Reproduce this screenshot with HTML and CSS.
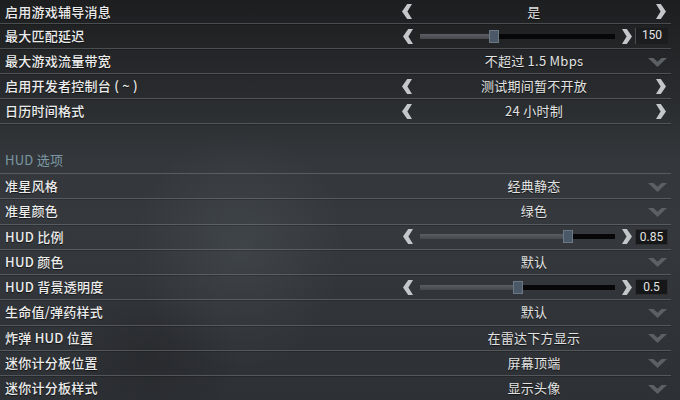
FILE: index.html
```html
<!DOCTYPE html>
<html lang="zh">
<head>
<meta charset="utf-8">
<link rel="stylesheet" href="styles.css">
</head>
<body>
<svg class="defs" aria-hidden="true">
  <symbol id="al" viewBox="0 0 10 15"><polygon points="10,0 5.2,0 0,7.5 5.2,15 10,15 5.4,7.5"/></symbol>
  <symbol id="ar" viewBox="0 0 10 15"><polygon points="0,0 4.8,0 10,7.5 4.8,15 0,15 4.6,7.5"/></symbol>
  <symbol id="dd" viewBox="0 0 19 9"><polygon points="0,0 5.5,0 9.5,3.8 13.5,0 19,0 9.5,9"/></symbol>
</svg>
<div class="panel">
  <div class="row first">
    <span class="label">启用游戏辅导消息</span>
    <div class="ctl cycler">
      <svg class="arr left"><use href="#al"/></svg>
      <span class="val">是</span>
      <svg class="arr right"><use href="#ar"/></svg>
    </div>
  </div>
  <div class="row">
    <span class="label">最大匹配延迟</span>
    <div class="ctl slider">
      <svg class="arr"><use href="#al"/></svg>
      <div class="track"><div class="fill" style="width:38%"></div><div class="thumb" style="left:38%"></div></div>
      <svg class="arr"><use href="#ar"/></svg>
      <span class="box plain">150</span>
    </div>
  </div>
  <div class="row">
    <span class="label">最大游戏流量带宽</span>
    <div class="ctl dropdown">
      <span class="val">不超过 1.5 Mbps</span>
      <svg class="chev"><use href="#dd"/></svg>
    </div>
  </div>
  <div class="row">
    <span class="label">启用开发者控制台 ( ~ )</span>
    <div class="ctl cycler">
      <svg class="arr left"><use href="#al"/></svg>
      <span class="val">测试期间暂不开放</span>
      <svg class="arr right"><use href="#ar"/></svg>
    </div>
  </div>
  <div class="row">
    <span class="label">日历时间格式</span>
    <div class="ctl cycler">
      <svg class="arr left"><use href="#al"/></svg>
      <span class="val">24 小时制</span>
      <svg class="arr right"><use href="#ar"/></svg>
    </div>
  </div>

  <div class="section"><span>HUD 选项</span></div>

  <div class="row hud">
    <span class="label">准星风格</span>
    <div class="ctl dropdown">
      <span class="val">经典静态</span>
      <svg class="chev"><use href="#dd"/></svg>
    </div>
  </div>
  <div class="row hud">
    <span class="label">准星颜色</span>
    <div class="ctl dropdown">
      <span class="val">绿色</span>
      <svg class="chev"><use href="#dd"/></svg>
    </div>
  </div>
  <div class="row hud">
    <span class="label">HUD 比例</span>
    <div class="ctl slider">
      <svg class="arr"><use href="#al"/></svg>
      <div class="track"><div class="fill" style="width:76%"></div><div class="thumb" style="left:76%"></div></div>
      <svg class="arr"><use href="#ar"/></svg>
      <span class="box">0.85</span>
    </div>
  </div>
  <div class="row hud">
    <span class="label">HUD 颜色</span>
    <div class="ctl dropdown">
      <span class="val">默认</span>
      <svg class="chev"><use href="#dd"/></svg>
    </div>
  </div>
  <div class="row hud">
    <span class="label">HUD 背景透明度</span>
    <div class="ctl slider">
      <svg class="arr"><use href="#al"/></svg>
      <div class="track"><div class="fill" style="width:50%"></div><div class="thumb" style="left:50%"></div></div>
      <svg class="arr"><use href="#ar"/></svg>
      <span class="box">0.5</span>
    </div>
  </div>
  <div class="row hud">
    <span class="label">生命值/弹药样式</span>
    <div class="ctl dropdown">
      <span class="val">默认</span>
      <svg class="chev"><use href="#dd"/></svg>
    </div>
  </div>
  <div class="row hud">
    <span class="label">炸弹 HUD 位置</span>
    <div class="ctl dropdown">
      <span class="val">在雷达下方显示</span>
      <svg class="chev"><use href="#dd"/></svg>
    </div>
  </div>
  <div class="row hud">
    <span class="label">迷你计分板位置</span>
    <div class="ctl dropdown">
      <span class="val">屏幕顶端</span>
      <svg class="chev"><use href="#dd"/></svg>
    </div>
  </div>
  <div class="row hud">
    <span class="label">迷你计分板样式</span>
    <div class="ctl dropdown">
      <span class="val">显示头像</span>
      <svg class="chev"><use href="#dd"/></svg>
    </div>
  </div>
</div>
</body>
</html>
```

FILE: styles.css
```css
html, body {
  margin: 0;
  padding: 0;
}
body {
  width: 680px;
  height: 400px;
  overflow: hidden;
  font-family: "Noto Sans CJK SC", "Noto Sans", sans-serif;
  font-size: 13px;
  letter-spacing: 0.25px;
  color: #e6e6e6;
  background:
    radial-gradient(ellipse 150px 170px at 240px 250px, rgba(120,130,138,0.16), rgba(120,130,138,0) 70%),
    radial-gradient(ellipse 120px 90px at 150px 360px, rgba(20,22,25,0.25), rgba(20,22,25,0) 75%),
    linear-gradient(180deg, #1d1e1f 0px, #232527 50px, #2b2e31 110px, #34383c 165px, #35393d 230px, #303337 320px, #2d3034 400px);
}
.defs {
  width: 0;
  height: 0;
  position: absolute;
}
.panel {
  width: 671px;
  display: flex;
  flex-direction: column;
}
.row {
  height: 24px;
  display: grid;
  grid-template-columns: 1fr 271px;
  align-items: center;
  border-bottom: 1px solid rgba(150,156,162,0.36);
  box-shadow: 0 1px 0 rgba(0,0,0,0.18);
}
.row.first {
  height: 23px;
}
.row.hud {
  height: 24.25px;
}
.label {
  padding-left: 5px;
  font-weight: 500;
  color: #ececec;
  line-height: 18px;
  white-space: nowrap;
  text-shadow: 0 1px 1px rgba(0,0,0,0.6);
}
.section {
  display: flex;
  align-items: flex-end;
  padding-left: 5px;
  border-bottom: 1px solid rgba(150,156,162,0.36);
  box-sizing: border-box;
  height: 50px;
}
.section span {
  line-height: 18px;
  padding-bottom: 4px;
  color: #7c98a3;
  font-weight: 400;
}
.ctl {
  height: 100%;
  display: grid;
  align-items: center;
}
.cycler, .dropdown {
  grid-template-columns: 1fr;
  grid-template-rows: 1fr;
  padding: 0 5px 0 2px;
}
.cycler > *, .dropdown > * {
  grid-area: 1 / 1;
}
.val {
  justify-self: center;
  color: #e2e2e2;
  line-height: 18px;
  white-space: nowrap;
  text-shadow: 0 1px 1px rgba(0,0,0,0.6);
}
.arr {
  width: 10px;
  height: 15px;
  fill: #c4c7c9;
}
.arr.left { justify-self: start; }
.arr.right { justify-self: end; }
.chev {
  justify-self: end;
  width: 19px;
  height: 9px;
  margin-right: -1px;
  margin-top: 2px;
  fill: #5b6064;
}
.slider {
  display: flex;
  align-items: center;
  padding-left: 3px;
}
.track {
  position: relative;
  width: 195px;
  height: 5px;
  margin: 0 7px;
  background: #070707;
}
.fill {
  height: 100%;
  background: linear-gradient(180deg, #5a5e62, #45494d);
}
.thumb {
  position: absolute;
  top: -4px;
  width: 8px;
  height: 11px;
  margin-left: -5px;
  background: #4a5867;
  border: 1px solid #6c7784;
}
.box {
  margin-left: 3px;
  width: 33px;
  height: 16px;
  box-sizing: border-box;
  background: #161718;
  border: 1px solid #2c2e30;
  font-family: Roboto, "Noto Sans", sans-serif;
  font-size: 12px;
  letter-spacing: 0;
  line-height: 14px;
  text-align: center;
  color: #e4e4e4;
}
.box.plain {
  background: rgba(0,0,0,0.18);
  border: none;
  border-left: 1px solid #4a4d50;
}
```
